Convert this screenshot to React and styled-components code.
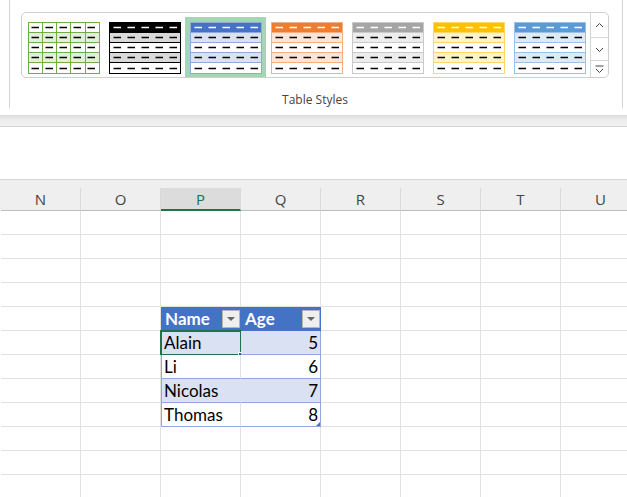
import React from 'react';
import styled, { createGlobalStyle } from 'styled-components';

const GlobalStyle = createGlobalStyle`
  html, body { margin: 0; padding: 0; background: #fff; }
  body { width: 627px; height: 497px; overflow: hidden; font-family: "Open Sans", "Noto Sans", sans-serif; }
`;

const Page = styled.div`
  width: 627px;
  height: 497px;
  overflow: hidden;
  display: flex;
  flex-direction: column;
  background: #fff;
`;

const Ribbon = styled.div`
  height: 115px;
  flex-shrink: 0;
  padding-left: 9px;
  box-sizing: border-box;
  background: #fff;
`;

const Group = styled.div`
  width: 614px;
  height: 108px;
  box-sizing: border-box;
  border-left: 1px solid #d6d6d6;
  border-right: 1px solid #d6d6d6;
  padding: 12px 13px 0 11px;
  display: flex;
  flex-direction: column;
`;

const Gallery = styled.div`
  height: 73px;
  box-sizing: border-box;
  border: 1px solid #cfcfcf;
  border-radius: 5px;
  display: flex;
  overflow: hidden;
`;

const Swatches = styled.div`
  flex: 1;
  display: flex;
  align-items: flex-start;
  padding: 4px 0 0 1px;
`;

const Swatch = styled.div`
  padding: 5px 4px 4px 5px;
  background: ${p => (p.$active ? '#a2d6b7' : 'transparent')};
  display: flex;
`;

const Scroller = styled.div`
  width: 17px;
  border-left: 1px solid #d6d6d6;
  display: flex;
  flex-direction: column;
`;

const ScrollBtn = styled.div`
  height: ${p => p.$h}px;
  flex: ${p => (p.$grow ? 1 : 'none')};
  box-sizing: border-box;
  border-bottom: ${p => (p.$grow ? 'none' : '1px solid #d6d6d6')};
  display: flex;
  align-items: center;
  justify-content: center;
`;

const GroupLabel = styled.div`
  padding-top: 14px;
  text-align: center;
  font-size: 12px;
  line-height: 16px;
  color: #444;
`;

const Shade = styled.div`
  height: 11px;
  flex-shrink: 0;
  background: linear-gradient(#dcdcdc, #ececec 45%, #f1f1f1);
  border-bottom: 1px solid #d3d3d3;
`;

const Blank = styled.div`
  height: 52px;
  flex-shrink: 0;
`;

const ColBar = styled.div`
  height: 32px;
  flex-shrink: 0;
  box-sizing: border-box;
  border-top: 1px solid #d5d5d5;
  background: #efefef;
  padding: 8px 0 0 1px;
  display: flex;
`;

const ColHead = styled.div`
  width: 80px;
  flex-shrink: 0;
  height: 23px;
  box-sizing: border-box;
  border-right: 1px solid #d9d9d9;
  border-bottom: ${p => (p.$active ? '2px solid #217346' : '1px solid #bdbdbd')};
  background: ${p => (p.$active ? '#dcdcdc' : 'transparent')};
  color: ${p => (p.$active ? '#217346' : '#444')};
  font-size: 15px;
  display: flex;
  align-items: center;
  justify-content: center;
`;

const Grid = styled.div`
  display: grid;
  grid-template-columns: repeat(8, 80px);
  grid-auto-rows: 24px;
  padding-left: 1px;
`;

const kinds = {
  head: { bg: '#4472c4', bottom: '#4472c4', right: '#4472c4', color: '#fff' },
  band: { bg: '#d9e1f2', bottom: '#8ea9db', right: '#d9e1f2', color: '#000' },
  plain: { bg: '#fff', bottom: '#8ea9db', right: '#e1e1e1', color: '#000' },
  empty: { bg: '#fff', bottom: '#e1e1e1', right: '#e1e1e1', color: '#000' },
};

const Cell = styled.div`
  position: relative;
  box-sizing: border-box;
  border-right: 1px solid ${p => (p.$edge === 'right' && p.$kind !== 'head' ? '#8ea9db' : kinds[p.$kind].right)};
  border-bottom: 1px solid ${p => kinds[p.$kind].bottom};
  background: ${p => kinds[p.$kind].bg};
  color: ${p => kinds[p.$kind].color};
  box-shadow: ${p => (p.$edge === 'left' && p.$kind !== 'head' ? 'inset 1px 0 0 #8ea9db' : 'none')};
  font-family: Lato, "Open Sans", sans-serif;
  font-size: 17px;
  font-weight: ${p => (p.$kind === 'head' ? 700 : 400)};
  display: flex;
  align-items: center;
  justify-content: ${p => (p.$kind === 'head' ? 'space-between' : p.$num ? 'flex-end' : 'flex-start')};
  padding: ${p => (p.$kind === 'head' ? '0 0 0 4px' : p.$num ? '0 2px 0 0' : '0 0 0 3px')};
`;

const FilterBtn = styled.span`
  width: 18px;
  height: 18px;
  box-sizing: border-box;
  border: 1px solid #b5b5b5;
  background: #efefef;
  display: flex;
  align-items: center;
  justify-content: center;
  &::after {
    content: '';
    border-left: 4px solid transparent;
    border-right: 4px solid transparent;
    border-top: 4px solid #666;
    margin-top: 1px;
  }
`;

const Selection = styled.div`
  position: absolute;
  left: -1px;
  top: -1px;
  width: 82px;
  height: 26px;
  box-sizing: border-box;
  border: 2px solid #217346;
  pointer-events: none;
  &::after {
    content: '';
    position: absolute;
    right: -5px;
    bottom: -5px;
    width: 6px;
    height: 6px;
    background: #217346;
    border-left: 1px solid #fff;
    border-top: 1px solid #fff;
  }
`;

const ResizeMark = styled.span`
  position: absolute;
  right: 0;
  bottom: 0;
  border-left: 4px solid transparent;
  border-bottom: 4px solid #4472c4;
`;

const themes = [
  { head: '#fff', band: '#e2efda', line: '#70ad47', dash: '#000', grid: true },
  { head: '#000', band: '#d9d9d9', line: '#000', dash: '#fff' },
  { head: '#4472c4', band: '#d9e1f2', line: '#8eaadb', dash: '#fff' },
  { head: '#ed7d31', band: '#fce4d6', line: '#f4b084', dash: '#fff' },
  { head: '#a5a5a5', band: '#ededed', line: '#c9c9c9', dash: '#fff' },
  { head: '#ffc000', band: '#fff2cc', line: '#ffd966', dash: '#fff' },
  { head: '#5b9bd5', band: '#ddebf7', line: '#9bc2e6', dash: '#fff' },
];

// row tops and heights inside the 72x52 thumbnail
const thumbRows = [
  { y: 0.5, h: 10 },
  { y: 10.5, h: 10 },
  { y: 20.5, h: 10 },
  { y: 30.5, h: 10 },
  { y: 40.5, h: 11 },
];
const gridX = [14.5, 28.5, 42.5, 57.5];

const Thumb = ({ t }) => (
  <svg width="72" height="52" viewBox="0 0 72 52">
    <g shapeRendering="crispEdges">
      {thumbRows.map((r, i) => (
        <rect
          key={i}
          x="0.5"
          y={r.y}
          width="71"
          height={r.h}
          fill={i === 0 ? t.head : i % 2 ? t.band : '#fff'}
          stroke={t.line}
        />
      ))}
      {t.grid && gridX.map(x => (
        <line key={x} x1={x} x2={x} y1="0.5" y2="51.5" stroke={t.line} />
      ))}
    </g>
    {thumbRows.map((r, i) =>
      [0, 1, 2, 3, 4].map(c => {
        const x = (t.grid ? 3.5 : 4.5) + Math.round(c * 14.1);
        const y = Math.floor(r.y + r.h / 2) + 0.5;
        return (
          <line
            key={`${i}-${c}`}
            x1={x}
            x2={x + 7.5}
            y1={y}
            y2={y}
            stroke={i === 0 ? t.dash : '#000'}
            strokeWidth="1.5"
          />
        );
      })
    )}
  </svg>
);

const Chevron = ({ kind }) => (
  <svg width="9" height="9" viewBox="0 0 9 9" fill="none" stroke="#444" strokeWidth="1">
    {kind === 'up' && <polyline points="1,6 4.5,2.5 8,6" />}
    {kind === 'down' && <polyline points="1,3 4.5,6.5 8,3" />}
    {kind === 'more' && (
      <>
        <line x1="0.5" x2="8.5" y1="1" y2="1" />
        <polyline points="1,4 4.5,7.5 8,4" />
      </>
    )}
  </svg>
);

const columns = ['N', 'O', 'P', 'Q', 'R', 'S', 'T', 'U'];

const table = [
  { kind: 'head', name: 'Name', age: 'Age' },
  { kind: 'band', name: 'Alain', age: '5', selected: true },
  { kind: 'plain', name: 'Li', age: '6' },
  { kind: 'band', name: 'Nicolas', age: '7' },
  { kind: 'plain', name: 'Thomas', age: '8', last: true },
];

const TOP = 4;

const App = () => {
  const cells = [];
  for (let r = 0; r < 12; r++) {
    const row = table[r - TOP];
    columns.forEach((c, ci) => {
      const key = `${c}${r}`;
      if (row && ci === 2) {
        cells.push(
          <Cell key={key} $kind={row.kind} $edge="left">
            {row.name}
            {row.kind === 'head' && <FilterBtn />}
            {row.selected && <Selection />}
          </Cell>
        );
      } else if (row && ci === 3) {
        cells.push(
          <Cell key={key} $kind={row.kind} $edge="right" $num={row.kind !== 'head'}>
            {row.age}
            {row.kind === 'head' && <FilterBtn />}
            {row.last && <ResizeMark />}
          </Cell>
        );
      } else {
        cells.push(<Cell key={key} $kind="empty" />);
      }
    });
  }

  return (
    <Page>
      <GlobalStyle />
      <Ribbon>
        <Group>
          <Gallery>
            <Swatches>
              {themes.map((t, i) => (
                <Swatch key={i} $active={i === 2}>
                  <Thumb t={t} />
                </Swatch>
              ))}
            </Swatches>
            <Scroller>
              <ScrollBtn $h={25}><Chevron kind="up" /></ScrollBtn>
              <ScrollBtn $h={23}><Chevron kind="down" /></ScrollBtn>
              <ScrollBtn $grow><Chevron kind="more" /></ScrollBtn>
            </Scroller>
          </Gallery>
          <GroupLabel>Table Styles</GroupLabel>
        </Group>
      </Ribbon>
      <Shade />
      <Blank />
      <ColBar>
        {columns.map(c => (
          <ColHead key={c} $active={c === 'P'}>{c}</ColHead>
        ))}
      </ColBar>
      <Grid>{cells}</Grid>
    </Page>
  );
};

export default App;
